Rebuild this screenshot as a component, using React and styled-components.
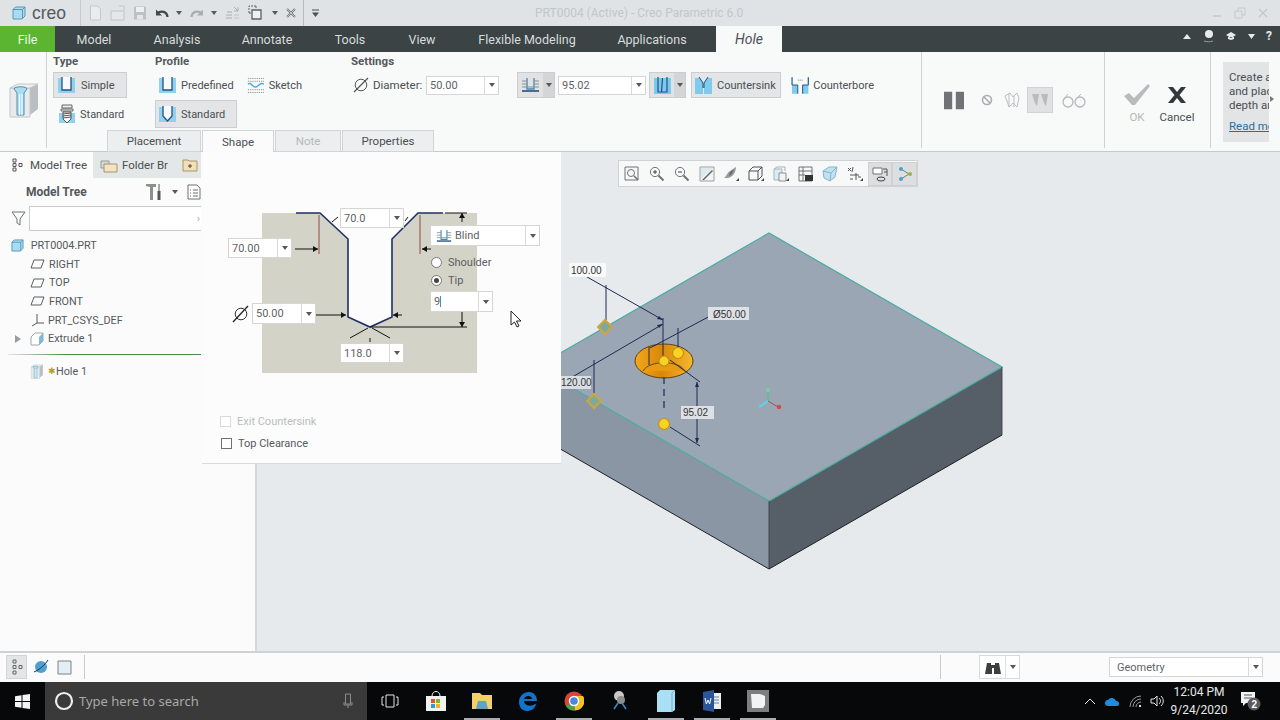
import React from "react";
import styled, { createGlobalStyle } from "styled-components";

const GlobalStyle = createGlobalStyle`
  html, body { margin: 0; padding: 0; background: #fff; overflow: hidden; }
  * { box-sizing: border-box; }
`;

const Screen = styled.div`
  width: 1280px;
  height: 720px;
  display: flex;
  flex-direction: column;
  overflow: hidden;
  font-family: Roboto, "Noto Sans", sans-serif;
  font-size: 11.5px;
  color: #4a4f52;
`;

/* ---------- title bar ---------- */
const TitleBar = styled.div`
  height: 26px;
  flex: none;
  display: flex;
  align-items: center;
  background: #dfe3e5;
  position: relative;
  padding-left: 12px;
`;
const Brand = styled.div`
  display: flex;
  align-items: center;
  gap: 6px;
  width: 68px;
  font-family: "Liberation Sans", sans-serif;
  font-size: 17.5px;
  color: #555a5d;
`;
const QuickBar = styled.div`
  display: flex;
  align-items: center;
  gap: 7.5px;
  height: 26px;
  padding: 0 6px 0 8px;
  border-left: 1px solid #c6cacc;
  border-right: 1px solid #b8bcbf;
`;
const More = styled.div`
  margin-left: 7px;
  display: flex;
`;
const WindowTitle = styled.div`
  position: absolute;
  left: 535px;
  top: 6px;
  color: #c2c7ca;
  font-size: 12px;
  white-space: nowrap;
`;
const WindowButtons = styled.div`
  margin-left: auto;
  display: flex;
  gap: 11px;
  padding-right: 11px;
  color: #c5c9cc;
`;

/* ---------- menu bar ---------- */
const MenuBar = styled.div`
  height: 26px;
  flex: none;
  display: flex;
  align-items: stretch;
  background: #3b4345;
`;
const FileTab = styled.div`
  width: 55px;
  display: flex;
  align-items: center;
  justify-content: center;
  background: #5cb531;
  color: #eef7e8;
  font-size: 12.5px;
`;
const MenuItem = styled.div`
  width: ${(p) => p.$w}px;
  display: flex;
  align-items: center;
  justify-content: center;
  color: #d8dcdd;
  font-size: 12.5px;
  white-space: nowrap;
`;
const HoleTab = styled.div`
  width: 66px;
  display: flex;
  align-items: center;
  justify-content: center;
  background: #f8f9f9;
  color: #4d5255;
  font-style: italic;
  font-size: 14px;
`;
const MenuRight = styled.div`
  margin-left: auto;
  display: flex;
  align-items: center;
  gap: 11px;
  padding: 0 8px 6px 0;
  color: #e8eaea;
  font-weight: 700;
  font-size: 12px;
`;

/* ---------- ribbon ---------- */
const Ribbon = styled.div`
  height: 100px;
  flex: none;
  display: flex;
  background: #f8f9f9;
  border-bottom: 1px solid #c6cacc;
`;
const LeadIcon = styled.div`
  width: 47px;
  flex: none;
  height: 96px;
  display: flex;
  align-items: center;
  justify-content: center;
  padding-left: 2px;
  border-right: 1px solid #cfd2d4;
`;
const RibbonMain = styled.div`
  width: 875px;
  flex: none;
  position: relative;
  display: flex;
  flex-direction: column;
  height: 100px;
  &::after {
    content: "";
    position: absolute;
    right: 0;
    top: 0;
    width: 1px;
    height: 96px;
    background: #cfd2d4;
  }
`;
const GroupRow = styled.div`
  height: 78px;
  flex: none;
  display: flex;
`;
const Group = styled.div`
  width: ${(p) => p.$w}px;
  flex: none;
  padding-left: ${(p) => p.$pad || 0}px;
  display: flex;
  flex-direction: column;
`;
const GroupLabel = styled.div`
  height: 20px;
  padding-top: 2px;
  font-weight: 700;
  font-size: 11.5px;
  color: #54585b;
`;
const ToolRow = styled.div`
  display: flex;
  align-items: center;
  height: ${(p) => p.$h || 26}px;
  margin-top: ${(p) => p.$mt || 0}px;
`;
const ToolButton = styled.div`
  display: flex;
  align-items: center;
  gap: ${(p) => p.$gap || 5}px;
  height: ${(p) => p.$h || 26}px;
  width: ${(p) => p.$w}px;
  margin-left: ${(p) => p.$ml || 0}px;
  padding-left: ${(p) => p.$pl || 3}px;
  background: ${(p) => (p.$on ? "#e3e5e6" : "transparent")};
  border: 1px solid ${(p) => (p.$on ? "#cbcdce" : "transparent")};
  font-size: 11px;
  white-space: nowrap;
  flex: none;
`;
const DiameterLabel = styled.div`
  display: flex;
  align-items: center;
  gap: 4px;
  width: 75px;
  padding-left: 2px;
`;
const Combo = styled.div`
  display: flex;
  align-items: center;
  width: ${(p) => p.$w}px;
  height: ${(p) => p.$h || 19}px;
  margin-left: ${(p) => p.$ml || 0}px;
  background: #fff;
  border: 1px solid #d3d5d6;
  flex: none;
`;
const ComboValue = styled.div`
  flex: 1;
  padding-left: ${(p) => p.$pl || 3}px;
  font-size: 11px;
  color: #5f6366;
  white-space: nowrap;
  display: flex;
  align-items: center;
  gap: 3px;
`;
const TextCaret = styled.span`
  width: 1px;
  height: 11px;
  margin-left: -3px;
  background: #4a8fb5;
`;
const ComboArrow = styled.div`
  width: 14px;
  height: 100%;
  display: flex;
  align-items: center;
  justify-content: center;
  border-left: 1px solid #d8dadb;
`;
const Arrow = styled.span`
  display: inline-block;
  width: 0;
  height: 0;
  border-left: 3px solid transparent;
  border-right: 3px solid transparent;
  border-top: 4px solid #55595c;
`;
const SplitButton = styled.div`
  display: flex;
  height: 26px;
  width: ${(p) => p.$w}px;
  margin-left: ${(p) => p.$ml || 0}px;
  flex: none;
  background: #e0e2e3;
  border: 1px solid #cbcdce;
`;
const SplitIcon = styled.div`
  flex: 1;
  display: flex;
  align-items: center;
  justify-content: center;
`;
const SplitArrow = styled.div`
  width: 11px;
  display: flex;
  align-items: center;
  justify-content: center;
  background: #d3d5d6;
`;
const PanelTabs = styled.div`
  display: flex;
  height: 22px;
  flex: none;
  padding-left: 60px;
`;
const PanelTab = styled.div`
  width: ${(p) => p.$w}px;
  display: flex;
  align-items: center;
  justify-content: center;
  background: ${(p) => (p.$on ? "#fbfbfb" : "#eceeef")};
  border: 1px solid #d2d4d5;
  border-bottom: ${(p) => (p.$on ? "none" : "1px solid #d2d4d5")};
  color: ${(p) => (p.$off ? "#b5b9bb" : "#4a4f52")};
  margin-right: 1px;
`;
const ControlGroup = styled.div`
  width: 183px;
  flex: none;
  height: 96px;
  display: flex;
  align-items: center;
  padding: 0 0 0 21px;
  border-right: 1px solid #cfd2d4;
`;
const ControlSlot = styled.div`
  width: ${(p) => p.$w}px;
  height: 26px;
  margin-left: ${(p) => p.$ml || 0}px;
  display: flex;
  align-items: center;
  justify-content: center;
  flex: none;
  background: ${(p) => (p.$on ? "#dfe1e2" : "transparent")};
  border: 1px solid ${(p) => (p.$on ? "#d0d2d3" : "transparent")};
`;
const ConfirmGroup = styled.div`
  width: 106px;
  flex: none;
  height: 96px;
  display: flex;
  padding: 31px 0 0 12px;
  border-right: 1px solid #cfd2d4;
`;
const ConfirmAction = styled.div`
  width: 40px;
  display: flex;
  flex-direction: column;
  align-items: center;
  color: ${(p) => (p.$off ? "#b6babc" : "#4a4f52")};
`;
const ConfirmGlyph = styled.div`
  height: 24px;
  display: flex;
  align-items: center;
`;
const ConfirmText = styled.div`
  margin-top: 2px;
  line-height: 16px;
`;
const HelpCard = styled.div`
  margin: 10px 0 0 12px;
  width: 46px;
  height: 80px;
  flex: none;
  overflow: hidden;
  background: #e2e4e6;
  padding: 8px 0 0 6px;
  font-size: 11.5px;
  line-height: 14px;
  white-space: nowrap;
  color: #4a4f52;
`;
const HelpLink = styled.div`
  margin-top: 7px;
  color: #2a6f9e;
  text-decoration: underline;
`;
const HelpCaret = styled.div`
  margin: 44px 0 0 1px;
  width: 0;
  height: 0;
  border-top: 3px solid transparent;
  border-bottom: 3px solid transparent;
  border-left: 4px solid #777;
`;

/* ---------- main area ---------- */
const Main = styled.div`
  flex: 1;
  display: flex;
  position: relative;
  min-height: 0;
`;
const Sidebar = styled.div`
  width: 257px;
  flex: none;
  background: #fbfbfb;
  border-right: 2px solid #d5d8da;
`;
const SideTabs = styled.div`
  height: 26px;
  display: flex;
  width: 201px;
`;
const SideTab = styled.div`
  width: ${(p) => p.$w}px;
  display: flex;
  align-items: center;
  gap: ${(p) => p.$gap || 6}px;
  padding-left: ${(p) => p.$pl || 10}px;
  background: ${(p) => (p.$on ? "#fbfbfb" : "#e4e7e8")};
  white-space: nowrap;
  overflow: hidden;
`;
const TreeHead = styled.div`
  height: 27px;
  width: 201px;
  display: flex;
  align-items: center;
  padding: 1px 0 0 26px;
  font-weight: 700;
  font-size: 12px;
  color: #54585b;
`;
const TreeTools = styled.div`
  margin-left: auto;
  display: flex;
  align-items: center;
  gap: 9px;
`;
const SearchRow = styled.div`
  display: flex;
  align-items: center;
  gap: 3px;
  padding-left: 11px;
  height: 26px;
  width: 201px;
`;
const SearchBox = styled.div`
  flex: 1;
  height: 25px;
  background: #fff;
  border: 1px solid #c9cbcc;
  border-right: none;
  display: flex;
  align-items: center;
  justify-content: flex-end;
  padding-right: 1px;
  color: #aaa;
  font-size: 11px;
`;
const Tree = styled.div`
  width: 201px;
  margin-top: 5px;
  font-size: 10.8px;
`;
const TreeRow = styled.div`
  height: 18.7px;
  display: flex;
  align-items: center;
  gap: 4px;
  padding-left: ${(p) => p.$indent}px;
  color: #55595c;
  white-space: nowrap;
`;
const TreeTwist = styled.span`
  width: 0;
  height: 0;
  margin-left: -15px;
  margin-right: 5px;
  border-top: 4px solid transparent;
  border-bottom: 4px solid transparent;
  border-left: 6px solid #9a9da0;
`;
const InsertLine = styled.div`
  height: 1px;
  margin: 6px 0 7px 8px;
  background: linear-gradient(90deg, #e4e6e4, #4c8a4a 30%, #4c8a4a);
`;
const NewMark = styled.span`
  color: #b79b2c;
  margin-right: -4px;
  font-size: 9px;
`;

const Viewport = styled.div`
  flex: 1;
  position: relative;
  background: #e7eaec;
  overflow: hidden;
`;
const ModelCanvas = styled.svg`
  position: absolute;
  inset: 0;
  width: 100%;
  height: 100%;
`;
const ViewToolbar = styled.div`
  position: absolute;
  left: 361px;
  top: 8px;
  height: 27px;
  width: 300px;
  display: flex;
  align-items: center;
  padding-left: 1px;
  background: #f7f8f8;
  border: 1px solid #cfd2d4;
`;
const ViewSlot = styled.div`
  width: 24.8px;
  height: 24px;
  display: flex;
  align-items: center;
  justify-content: center;
  background: ${(p) => (p.$on ? "#dcdedf" : "transparent")};
  border: 1px solid ${(p) => (p.$on ? "#cfd1d2" : "transparent")};
`;

/* ---------- shape panel ---------- */
const ShapePanel = styled.div`
  position: absolute;
  left: 202px;
  top: 0;
  width: 359px;
  height: 311px;
  background: #fcfcfc;
  box-shadow: 0 1px 0 #d9dcde;
  display: flex;
  flex-direction: column;
`;
const DiagramArea = styled.div`
  position: relative;
  height: 240px;
  margin-top: 40px;
  flex: none;
`;
const DiagramArt = styled.svg`
  position: absolute;
  inset: 0;
  width: 359px;
  height: 240px;
`;
const FloatCombo = styled(Combo)`
  position: absolute;
  left: ${(p) => p.$x - 202}px;
  top: ${(p) => p.$y - 192}px;
  margin: 0;
  border-color: #d5d6d2;
`;
const RadioRow = styled.div`
  position: absolute;
  left: 229px;
  top: ${(p) => p.$y - 192 - 8}px;
  display: flex;
  align-items: center;
  gap: 6px;
  height: 16px;
  font-size: 11px;
  color: #5b5f62;
`;
const Radio = styled.span`
  width: 11px;
  height: 11px;
  border-radius: 50%;
  background: #fff;
  border: 1px solid #77797b;
  display: flex;
  align-items: center;
  justify-content: center;
  &::after {
    content: "";
    width: 5px;
    height: 5px;
    border-radius: 50%;
    background: ${(p) => (p.$on ? "#444" : "transparent")};
  }
`;
const CheckRow = styled.div`
  display: flex;
  align-items: center;
  gap: 6px;
  height: 22px;
  padding-left: ${(p) => (p.$off ? 18 : 19)}px;
  font-size: 11px;
  color: ${(p) => (p.$off ? "#b9bcbe" : "#55595c")};
`;
const CheckBox = styled.span`
  width: 11px;
  height: 11px;
  border: 1px solid ${(p) => (p.$off ? "#d8dadb" : "#6e7072")};
  background: #fff;
`;
const CheckList = styled.div`
  margin-top: -22px;
`;
const Cursor = styled.svg`
  position: absolute;
  left: 308px;
  top: 118px;
`;

/* ---------- status bar ---------- */
const StatusBar = styled.div`
  height: 31px;
  flex: none;
  display: flex;
  align-items: center;
  background: #fbfbfb;
  border-top: 2px solid #cfd2d4;
  padding: 0 0 1px 6px;
`;
const StatusSlot = styled.div`
  width: 21px;
  height: 24px;
  margin-right: ${(p) => p.$mr || 3}px;
  display: flex;
  align-items: center;
  justify-content: center;
  background: ${(p) => (p.$on ? "#e3e5e6" : "transparent")};
  border: 1px solid ${(p) => (p.$on ? "#d2d4d5" : "transparent")};
`;
const StatusDivider = styled.div`
  width: 1px;
  height: 24px;
  background: #c9cccd;
  margin-left: ${(p) => p.$ml}px;
`;
const FindButton = styled.div`
  margin-left: 38px;
  width: 41px;
  height: 24px;
  display: flex;
  border: 1px solid #d8dadb;
  background: #fff;
`;
const FindIcon = styled.div`
  flex: 1;
  display: flex;
  align-items: center;
  justify-content: center;
  border-right: 1px solid #dddfe0;
`;
const FindArrow = styled.div`
  width: 13px;
  display: flex;
  align-items: center;
  justify-content: center;
`;

/* ---------- taskbar ---------- */
const Taskbar = styled.div`
  height: 38px;
  flex: none;
  display: flex;
  align-items: center;
  background: #070809;
  color: #e8e8e8;
`;
const StartButton = styled.div`
  width: 45px;
  display: flex;
  justify-content: center;
`;
const SearchField = styled.div`
  width: 322px;
  height: 38px;
  background: #3a3a3a;
  display: flex;
  align-items: center;
  padding: 0 14px 0 9px;
  gap: 5px;
  color: #a9a9a9;
  font-family: "Noto Sans", sans-serif;
  font-size: 13px;
`;
const MicSlot = styled.div`
  margin-left: auto;
  display: flex;
`;
const TaskIcon = styled.div`
  width: 46px;
  height: 38px;
  flex: none;
  position: relative;
  display: flex;
  align-items: center;
  justify-content: center;
  &::after {
    content: "";
    position: absolute;
    left: 5px;
    right: 5px;
    bottom: 0;
    height: 2px;
    background: ${(p) => (p.$open ? "#a9adb3" : "transparent")};
  }
`;
const Tray = styled.div`
  margin-left: auto;
  display: flex;
  align-items: center;
  gap: 8px;
`;
const Clock = styled.div`
  width: 62px;
  margin: 0 -8px 0 -4px;
  text-align: center;
  font-family: Roboto, sans-serif;
  font-size: 12px;
  line-height: 18px;
  white-space: nowrap;
`;
const Notify = styled.div`
  width: 40px;
  margin-right: 10px;
  display: flex;
  justify-content: center;
`;

/* ---------- icons ---------- */
const Svg = ({ w = 16, h = 16, box, children }) => (
  <svg width={w} height={h} viewBox={box || `0 0 ${w} ${h}`} fill="none">
    {children}
  </svg>
);

const Cube = ({ s = 14 }) => (
  <Svg w={s} h={s} box="0 0 14 14">
    <path d="M1 3.500 3.500 1H13v9l-3 3H1z" fill="#a9dcf2" stroke="#5b97b5" />
    <path d="M1 3.500h9.500V13M10.500 3.500 13 1" stroke="#5b97b5" />
  </Svg>
);
const Doc = ({ c = "#c4c8ca" }) => (
  <Svg w={13} h={16}>
    <path d="M1.500 1h7l3 3v11h-10z" fill="#e9ecee" stroke={c} />
  </Svg>
);
const FolderOpen = () => (
  <Svg w={16} h={16}>
    <path d="M1 6h13v9H1zM9 1h5v4" fill="#e4e7e8" stroke="#c0c4c6" />
  </Svg>
);
const Save = () => (
  <Svg w={14} h={16}>
    <path d="M1 1.500h12v13H1z" fill="#bcc1c4" />
    <path d="M3 2h8v5H3z" fill="#eceeef" />
    <path d="M4 10h6v4.500H4z" fill="#e3e6e7" />
  </Svg>
);
const Undo = ({ c = "#44494c", flip }) => (
  <Svg w={14} h={14}>
    <g transform={flip ? "matrix(-1 0 0 1 14 0)" : undefined}>
      <path d="M12.500 11C12 6 8 4.500 3 6.500" stroke={c} strokeWidth="2.200" />
      <path d="M1 3.500v6h6z" fill={c} />
    </g>
  </Svg>
);
const Regen = () => (
  <Svg w={16} h={16}>
    <path d="M1 10h6M1 13h6M2 7h5M9 2l4 4M13 2v4h-4" stroke="#a9aeb1" />
    <path d="M9 10h5M9 13h5" stroke="#c0c4c6" />
  </Svg>
);
const Windows = () => (
  <Svg w={16} h={16}>
    <path d="M4 5h9v9H4z" stroke="#5d6265" strokeWidth="1.300" fill="#eef1f2" />
    <path d="M1 8V1h7M8 1v3M1 8h3" stroke="#5d6265" strokeDasharray="2 1" />
  </Svg>
);
const CloseX = () => (
  <Svg w={12} h={12}>
    <path d="M2 2l8 8M10 2l-8 8" stroke="#6f7477" strokeWidth="2" />
    <path d="M2 2l8 8M10 2l-8 8" stroke="#dfe3e5" strokeWidth=".7" />
  </Svg>
);
const DropLine = () => (
  <Svg w={9} h={9}>
    <path d="M1 1h7" stroke="#4b5053" />
    <path d="M1 3.500h7L4.500 8z" fill="#4b5053" />
  </Svg>
);
const SimpleHole = () => (
  <Svg w={19} h={19}>
    <path d="M1 2h17v15H1z" fill="#8fd2ef" />
    <path d="M5 1h9v13H5z" fill="#f6fafb" />
    <path d="M5 1v13h9V1" stroke="#2c4f7f" strokeWidth="1.300" />
  </Svg>
);
const TipHole = () => (
  <Svg w={19} h={19}>
    <path d="M1 2h17v15H1z" fill="#8fd2ef" />
    <path d="M5 1h9v10l-4.500 5L5 11z" fill="#f6fafb" />
    <path d="M5 1v10l4.500 5 4.500-5V1" stroke="#2c4f7f" strokeWidth="1.300" />
  </Svg>
);
const StandardScrew = () => (
  <Svg w={18} h={20}>
    <path d="M1 9h16v10H1z" fill="#8fd2ef" />
    <path d="M4 1h10v3H4zM3 5h12v2H3z" stroke="#666" fill="#eee" />
    <path d="M5 8h8v7l-4 4-4-4z" fill="#fff" stroke="#555" />
    <path d="M5 10l8-1M5 12l8-1M5 14l8-1" stroke="#555" />
  </Svg>
);
const SketchWave = () => (
  <Svg w={19} h={18}>
    <path d="M1 2h17M1 5h17M1 14h17M1 17h17" stroke="#7b7f82" strokeDasharray="1 1" />
    <path d="M1 8c4-3 5 5 9 3s4-5 8-3" stroke="#4fa9d4" strokeWidth="1.600" />
  </Svg>
);
const DiameterGlyph = ({ s = 16, c = "#55595c" }) => (
  <Svg w={s} h={s} box="0 0 16 16">
    <circle cx="8" cy="8" r="5.800" stroke={c} />
    <path d="M1 15 15 1" stroke={c} strokeWidth="1.200" />
  </Svg>
);
const BlindGlyph = ({ w = 19 }) => (
  <Svg w={w} h={16} box="0 0 19 16">
    <path d="M6 1v11h7V1" stroke="#3e8bb8" strokeWidth="1.300" />
    <path d="M1 4h5M1 7h5M13 4h5M13 7h5M1 10h17" stroke="#8a8f92" />
    <path d="M1 14h17" stroke="#2b4d7a" strokeWidth="1.600" />
  </Svg>
);
const ThroughGlyph = () => (
  <Svg w={19} h={19}>
    <path d="M1 2h17v16H1z" fill="#79cbee" />
    <path d="M5 1v15h9V1M9.500 2l-1 14" stroke="#2c4f7f" strokeWidth="1.200" />
  </Svg>
);
const SinkGlyph = () => (
  <Svg w={19} h={20}>
    <path d="M1 3h5l3 5v11H1zM18 3h-5l-3 5v11h8z" fill="#7ecbec" />
    <path d="M5 2l4 6v5M14 2l-4 6v5" stroke="#2c4f7f" />
  </Svg>
);
const BoreGlyph = () => (
  <Svg w={19} h={20}>
    <path d="M1 2h1v8h5v9H1zM12 10h5V2h1v17h-6z" fill="#7ecbec" />
    <path d="M1 2v8h6v9M18 2v8h-6v9" stroke="#2c4f7f" />
    <path d="M7 5h5" stroke="#777" strokeDasharray="1 1" />
  </Svg>
);
const HoleFeature = ({ w = 30, h = 36 }) => (
  <Svg w={w} h={h} box="0 0 30 36">
    <path d="M21 5 29 2v25l-8 6z" fill="#b9bec2" />
    <path d="M1 6h20v29H1z" fill="#e8eaeb" stroke="#c3c6c8" />
    <path d="M1 6 9 2h20l-8 4z" fill="#eef0f1" stroke="#c3c6c8" />
    <path d="M5 7c0-3 13-3 13 0l-3 4v22H8V11z" fill="#a8dcf2" stroke="#5b8da8" />
    <path d="M10.500 12v21M13 12v21" stroke="#f2fafd" strokeWidth="1.200" />
  </Svg>
);
const FlyCorner = () => <path d="m13 15 3-3v3z" fill="#444" />;
const ViewIcon = ({ kind }) => {
  const g = "#6f7477";
  const shapes = {
    refit: <><path d="M1 1h13v13H1z" stroke={g} /><circle cx="7" cy="7" r="3.500" stroke={g} /><path d="m10 10 4 4" stroke={g} strokeWidth="1.600" /></>,
    zoomin: <><circle cx="6" cy="6" r="4.600" stroke={g} /><path d="M4 6h4M6 4v4" stroke="#345" /><path d="m9.500 9.500 5 5" stroke={g} strokeWidth="2" /></>,
    zoomout: <><circle cx="6" cy="6" r="4.600" stroke={g} /><path d="M4 6h4" stroke="#345" /><path d="m9.500 9.500 5 5" stroke={g} strokeWidth="2" /></>,
    repaint: <><path d="M1 1h14v14H1z" fill="#f2f5f6" stroke="#9a9fa2" /><path d="M2 2h12L2 13z" fill="#dfe8ec" /><path d="M3 14 13 4l1 1-9 9z" fill="#5d6265" /></>,
    shade: <><path d="M1 12c2-1 3-5 6-7s4-3 6-4c0 5-3 10-8 11z" fill="#9a9da0" /><path d="M7 6c1-1 3-2 4-3-1 3-2 6-5 7z" fill="#6a6d70" /><FlyCorner /></>,
    box: <><path d="M1 5h9v9H1zM1 5l4-4h9v9l-4 4M10 5l4-4" stroke="#4d5255" /><FlyCorner /></>,
    named: <><path d="M1 3h8v11H1z" fill="#d9edf6" stroke="#a5b3ba" /><path d="M1 3l3-2h8v4" stroke="#a5b3ba" /><path d="M6 7h7v8H6z" fill="#f2f3f3" stroke="#8b8f92" /><FlyCorner /></>,
    shot: <><path d="M1 1h13v14H1z" stroke={g} /><path d="M1 5h13M1 9h6M5 1v14" stroke={g} /><path d="M7 9h8v6H7z" fill="#333" /></>,
    glass: <><path d="M1 5l6-4h8l-2 10-5 4-6-3z" fill="#bfe2f2" stroke="#8cb5c8" /><path d="M1 5l8 2 6-6M9 7l-1 8" stroke="#8cb5c8" /></>,
    datum: <><path d="M1 2l3 3M4 2 1 5M6 1l-1 5M3 9h9M9 7v7M3 13h3M11 11h3" stroke="#55595c" /><FlyCorner /></>,
    display: <><path d="M1 2h9v6H1z" fill="#fff" stroke={g} /><path d="M11 3h4v7M12 6h3" stroke="#555" /><ellipse cx="9" cy="13" rx="4" ry="2" stroke="#444" /></>,
    spin: <><path d="M4 3 12 8 4 13" stroke="#6a7f8a" /><circle cx="4" cy="3" r="2" fill="#4ca1c9" /><circle cx="13" cy="8" r="2" fill="#9ab24a" /><circle cx="4" cy="13" r="2" fill="#4ca1c9" /></>,
  };
  return <Svg w={16} h={16}>{shapes[kind]}</Svg>;
};
const Plane = () => (
  <Svg w={15} h={10}>
    <path d="M4 1h10l-3 8H1z" stroke="#5a5f62" />
  </Svg>
);
const SmallCheck = () => (
  <Svg w={28} h={22}>
    <path d="M1 12l5-3 5 5L25 0l2 2-15 19H9z" fill="#b9bcbe" />
  </Svg>
);
const BigX = () => (
  <Svg w={20} h={18}>
    <path d="M1 1h5l4 5 4-5h5l-6.500 8 6.500 8h-5l-4-5-4 5H1l6.500-8z" fill="#33383b" />
  </Svg>
);

const diagramNavy = "#1f2f68";

const App = () => {
  const viewIcons = ["refit", "zoomin", "zoomout", "repaint", "shade", "box", "named", "shot", "glass", "datum", "display", "spin"];
  return (
    <Screen>
      <GlobalStyle />
      <TitleBar>
        <Brand>
          <Cube />
          creo
        </Brand>
        <QuickBar>
          <Doc />
          <FolderOpen />
          <Save />
          <Undo />
          <Arrow />
          <Undo c="#a9aeb1" flip />
          <Arrow />
          <Regen />
          <Windows />
          <Arrow />
          <CloseX />
        </QuickBar>
        <More>
          <DropLine />
        </More>
        <WindowTitle>PRT0004 (Active) - Creo Parametric 6.0</WindowTitle>
        <WindowButtons>
          <Svg w={12} h={12}><path d="M2 9h8" stroke="#c5c9cc" strokeWidth="1.500" /></Svg>
          <Svg w={12} h={12}><path d="M1 4h7v7H1zM4 4V1h7v7H8" stroke="#c5c9cc" /></Svg>
          <Svg w={12} h={12}><path d="M2 2l8 8M10 2l-8 8" stroke="#c5c9cc" strokeWidth="1.400" /></Svg>
        </WindowButtons>
      </TitleBar>

      <MenuBar>
        <FileTab>File</FileTab>
        <MenuItem $w={78}>Model</MenuItem>
        <MenuItem $w={88}>Analysis</MenuItem>
        <MenuItem $w={92}>Annotate</MenuItem>
        <MenuItem $w={74}>Tools</MenuItem>
        <MenuItem $w={70}>View</MenuItem>
        <MenuItem $w={140}>Flexible Modeling</MenuItem>
        <MenuItem $w={110}>Applications</MenuItem>
        <MenuItem $w={9} />
        <HoleTab>Hole</HoleTab>
        <MenuRight>
          <Svg w={10} h={7}><path d="M1 6l4-5 4 5z" fill="#e8eaea" /></Svg>
          <Svg w={11} h={14}><circle cx="6" cy="5" r="4" fill="#e8eaea" /><path d="M1 12c3 1 6 1 9 0" stroke="#9a9d9e" /></Svg>
          <Svg w={12} h={10}><path d="M6 1l5 3-5 3-5-3zM3 6v2l3 1 3-1V6" fill="#e8eaea" /></Svg>
          <Svg w={7} h={5}><path d="M0 0h7L3.500 5z" fill="#e8eaea" /></Svg>
          ?
        </MenuRight>
      </MenuBar>

      <Ribbon>
        <LeadIcon>
          <HoleFeature />
        </LeadIcon>
        <RibbonMain>
          <GroupRow>
            <Group $w={108} $pad={6}>
              <GroupLabel>Type</GroupLabel>
              <ToolRow>
                <ToolButton $on $w={74} $pl={3} $gap={5}><SimpleHole />Simple</ToolButton>
              </ToolRow>
              <ToolRow $h={28} $mt={2}>
                <ToolButton $w={74} $h={28} $pl={4} $gap={4}><StandardScrew />Standard</ToolButton>
              </ToolRow>
            </Group>
            <Group $w={196}>
              <GroupLabel>Profile</GroupLabel>
              <ToolRow>
                <ToolButton $w={84} $pl={2} $gap={4}><SimpleHole />Predefined</ToolButton>
                <ToolButton $w={60} $ml={4} $pl={0} $gap={4}><SketchWave />Sketch</ToolButton>
              </ToolRow>
              <ToolRow $h={28} $mt={2}>
                <ToolButton $on $w={82} $h={28} $pl={2} $gap={4}><TipHole />Standard</ToolButton>
              </ToolRow>
            </Group>
            <Group $w={570}>
              <GroupLabel>Settings</GroupLabel>
              <ToolRow>
                <DiameterLabel><DiameterGlyph />Diameter:</DiameterLabel>
                <Combo $w={73}>
                  <ComboValue>50.00</ComboValue>
                  <ComboArrow><Arrow /></ComboArrow>
                </Combo>
                <SplitButton $w={38} $ml={18}>
                  <SplitIcon><BlindGlyph /></SplitIcon>
                  <SplitArrow><Arrow /></SplitArrow>
                </SplitButton>
                <Combo $w={88} $ml={3}>
                  <ComboValue>95.02</ComboValue>
                  <ComboArrow><Arrow /></ComboArrow>
                </Combo>
                <SplitButton $w={37} $ml={3}>
                  <SplitIcon><ThroughGlyph /></SplitIcon>
                  <SplitArrow><Arrow /></SplitArrow>
                </SplitButton>
                <ToolButton $on $w={90} $ml={5} $pl={2} $gap={4}><SinkGlyph />Countersink</ToolButton>
                <ToolButton $w={88} $ml={6} $pl={0} $gap={4}><BoreGlyph />Counterbore</ToolButton>
              </ToolRow>
            </Group>
          </GroupRow>
          <PanelTabs>
            <PanelTab $w={94}>Placement</PanelTab>
            <PanelTab $w={72} $on>Shape</PanelTab>
            <PanelTab $w={66} $off>Note</PanelTab>
            <PanelTab $w={92}>Properties</PanelTab>
          </PanelTabs>
        </RibbonMain>
        <ControlGroup>
          <ControlSlot $w={22}>
            <Svg w={22} h={19}><path d="M0 0h9v19H0zM13 0h9v19h-9z" fill="#6f7375" /></Svg>
          </ControlSlot>
          <ControlSlot $w={21} $ml={11}>
            <Svg w={12} h={12}><circle cx="6" cy="6" r="4.500" stroke="#a9adaf" strokeWidth="1.600" /><path d="m3 3 6 6" stroke="#a9adaf" strokeWidth="1.600" /></Svg>
          </ControlSlot>
          <ControlSlot $w={30}>
            <Svg w={18} h={18}><path d="M2 5l5-3 3 4 4-4 2 5-2 9-4-4-4 4-2-6zM6 2v14M11 4v12" stroke="#bcc0c2" /></Svg>
          </ControlSlot>
          <ControlSlot $w={26} $on>
            <Svg w={18} h={16}><path d="M1 2h7l-2 12-2-3zM10 2h7l-2 12-2-3z" fill="#b9bcbe" /></Svg>
          </ControlSlot>
          <ControlSlot $w={41}>
            <Svg w={26} h={16}><circle cx="7" cy="10" r="5" stroke="#b5b9bb" strokeWidth="1.300" /><circle cx="19" cy="10" r="5" stroke="#b5b9bb" strokeWidth="1.300" /><path d="M2 8 7 2M14 8l6-6" stroke="#b5b9bb" /></Svg>
          </ControlSlot>
        </ControlGroup>
        <ConfirmGroup>
          <ConfirmAction $off>
            <ConfirmGlyph><SmallCheck /></ConfirmGlyph>
            <ConfirmText>OK</ConfirmText>
          </ConfirmAction>
          <ConfirmAction>
            <ConfirmGlyph><BigX /></ConfirmGlyph>
            <ConfirmText>Cancel</ConfirmText>
          </ConfirmAction>
        </ConfirmGroup>
        <HelpCard>
          Create a<br />and plac<br />depth ar
          <HelpLink>Read me</HelpLink>
        </HelpCard>
        <HelpCaret />
      </Ribbon>

      <Main>
        <Sidebar>
          <SideTabs>
            <SideTab $w={93} $on>
              <Svg w={14} h={14}><path d="M3 1h3v3H3zM3 5.500h3v3H3zM3 10h3v3H3zM9 5.500h3v3H9z" stroke="#555" /></Svg>
              Model Tree
            </SideTab>
            <SideTab $w={85} $pl={7} $gap={4}>
              <Svg w={18} h={16}><path d="M1 4h8v7H1z" fill="#d6d8d6" stroke="#999" /><path d="M4 7h13v8H4z" fill="#f4e3c2" stroke="#a89468" /></Svg>
              Folder Br
            </SideTab>
            <SideTab $w={23} $pl={4}>
              <Svg w={16} h={14}><path d="M1 2h5l1 1h8v10H1z" fill="#f2dfb8" stroke="#a89468" /><path d="M8 6v4M6 8h4" stroke="#444" /></Svg>
            </SideTab>
          </SideTabs>
          <TreeHead>
            Model Tree
            <TreeTools>
              <Svg w={18} h={18}><path d="M1 1h10v3H8v13H5V4L1 3z" fill="#8d8f8d" /><path d="M14 1v7" stroke="#555" /><path d="M12.500 8h3v9h-3z" fill="#555" /></Svg>
              <Arrow />
              <Svg w={14} h={16}><path d="M1 1h9l3 3v11H1z" stroke="#6c7073" fill="#fff" /><path d="M3 6h1M6 6h5M3 9h1M6 9h5M3 12h1M6 12h5" stroke="#6c7073" /></Svg>
            </TreeTools>
          </TreeHead>
          <SearchRow>
            <Svg w={15} h={15}><path d="M1 1h13L9 8v6l-3-2V8z" stroke="#6c7073" /></Svg>
            <SearchBox>›</SearchBox>
          </SearchRow>
          <Tree>
            <TreeRow $indent={11}><Cube s={13} />&nbsp;PRT0004.PRT</TreeRow>
            <TreeRow $indent={30}><Plane />RIGHT</TreeRow>
            <TreeRow $indent={30}><Plane />TOP</TreeRow>
            <TreeRow $indent={30}><Plane />FRONT</TreeRow>
            <TreeRow $indent={30}>
              <Svg w={14} h={14}><path d="M7 1v9m0 0h7M7 10l-5 3" stroke="#55595c" /></Svg>
              PRT_CSYS_DEF
            </TreeRow>
            <TreeRow $indent={30}>
              <TreeTwist />
              <Svg w={14} h={14}><path d="M1 5l4-4h8v8l-4 4H1z" fill="#fff" stroke="#a3a7aa" /><path d="M9 5l4-4v8l-4 4z" fill="#7dbcd8" /></Svg>
              Extrude 1
            </TreeRow>
            <InsertLine />
            <TreeRow $indent={30}>
              <HoleFeature w={14} h={15} />
              <NewMark>✱</NewMark>
              Hole 1
            </TreeRow>
          </Tree>
        </Sidebar>

        <Viewport>
          <ModelCanvas viewBox="257 152 1023 499">
            <defs>
              <linearGradient id="pit" x1="0" x2="1">
                <stop offset="0" stopColor="#f2a81c" />
                <stop offset="0.45" stopColor="#d98708" />
                <stop offset="1" stopColor="#f6b82f" />
              </linearGradient>
            </defs>
            <path d="M536 367 769 501V569L536 435z" fill="#8a96a3" />
            <path d="M1002 367V435L769 569V501z" fill="#565e67" />
            <path d="M769 233 1002 367 769 501 536 367z" fill="#9ba6b4" />
            <path d="M536 367 769 233 1002 367 769 501z" stroke="#46ad9f" strokeWidth="1.200" fill="none" />
            <path d="M769 501V569M1002 367V435" stroke="#3a4149" strokeWidth=".9" />
            <path d="M536 435 769 569 1002 435" stroke="#1d2126" strokeWidth="1" fill="none" />
            <ellipse cx="664" cy="361" rx="29" ry="17" fill="url(#pit)" stroke="#5a4310" />
            <path d="M643 371c6-11 36-11 42 0" stroke="#4a3a12" strokeWidth=".8" fill="#e99a10" />
            <g stroke="#1e2a52" strokeWidth="1" fill="none">
              <path d="M573 269 663 320M562 383 663 324M606 285V320M594 360V393M663 318V361" />
              <path d="M712 315 650 348M678 328V348M649 347V365M670 360 700 382M670 427 700 446M697 382V443" />
              <path d="M664 377V413" strokeDasharray="7 5" strokeWidth="1.200" />
            </g>
            <g fill="#1e2a52">
              <path d="M663 320l-6-1 2-3zM663 324l-6 1 2 3zM697 382l-2 5h4zM697 443l-2-5h4z" />
            </g>
            <g fill="#f7d326" stroke="#c08f10" strokeWidth="1.200">
              <circle cx="664" cy="361" r="5" />
              <circle cx="678" cy="353" r="5.500" />
              <circle cx="664" cy="424" r="5.500" />
            </g>
            <g fill="#7fa9a0" stroke="#cfa63a" strokeWidth="2">
              <path d="M605 320l7 7-7 7-7-7z" />
              <path d="M594 394l7 7-7 7-7-7z" />
            </g>
            <path d="M768 401V391" stroke="#5bbf8a" strokeWidth="1.200" />
            <circle cx="768" cy="390" r="2" fill="#6fd69a" />
            <path d="M768 401 759 407" stroke="#5fd0e6" strokeWidth="2.200" />
            <path d="M768 401 778 407" stroke="#9a5550" strokeWidth="1" />
            <circle cx="779" cy="407" r="2.200" fill="#d84a3a" />
            <g fontFamily="Liberation Sans, sans-serif" fontSize="10" fill="#333">
              <rect x="569" y="263" width="37" height="14" fill="#f8f9f9" />
              <text x="571" y="273.500">100.00</text>
              <rect x="560" y="376" width="31" height="13" fill="#d9dee3" />
              <text x="561" y="386">120.00</text>
              <rect x="708" y="307" width="41" height="13" fill="#dde1e5" />
              <text x="713" y="317.500">Ø50.00</text>
              <rect x="681" y="406" width="33" height="13" fill="#dde1e5" />
              <text x="683" y="416">95.02</text>
            </g>
          </ModelCanvas>
          <ViewToolbar>
            {viewIcons.map((k) => (
              <ViewSlot key={k} $on={k === "display" || k === "spin"}>
                <ViewIcon kind={k} />
              </ViewSlot>
            ))}
          </ViewToolbar>
        </Viewport>

        <ShapePanel>
          <DiagramArea>
            <DiagramArt viewBox="202 192 359 240">
              <path d="M262 213H477V373H262z" fill="#d4d3c8" />
              <path d="M320 213H418L392 239V317L370 327 348 317V239z" fill="#fcfcfc" />
              <path d="M296 213H320L348 239V317L370 327 392 317V239L418 213H443" stroke={diagramNavy} strokeWidth="1.600" fill="none" />
              <path d="M319 215V254M420 215V254" stroke="#8a4a44" strokeWidth="1" />
              <g stroke="#111" strokeWidth="1" fill="none">
                <path d="M295 249H318M422 249H431M445 213H467M462 213V222M462 312V327M370 327H467" />
                <path d="M316 315H346M393 315H402M350 338 368 328M372 328 390 338M370 338V342" />
                <path d="M332 222 338 217M405 221 408 217" />
              </g>
              <g fill="#111">
                <path d="M318 249l-5-3v6zM422 249l5-3v6zM462 213l-3 5h6zM462 327l-3-5h6zM346 315l-5-3v6zM393 315l5-3v6z" />
              </g>
              <g transform="translate(233 306)">
                <circle cx="8" cy="8" r="5.800" stroke="#333" fill="none" />
                <path d="M0 16 15 0" stroke="#222" strokeWidth="1.300" />
              </g>
            </DiagramArt>
            <FloatCombo $x={340} $y={208} $w={64} $h={20}>
              <ComboValue>70.0</ComboValue>
              <ComboArrow><Arrow /></ComboArrow>
            </FloatCombo>
            <FloatCombo $x={228} $y={238} $w={64} $h={20}>
              <ComboValue>70.00</ComboValue>
              <ComboArrow><Arrow /></ComboArrow>
            </FloatCombo>
            <FloatCombo $x={252} $y={303} $w={64} $h={21}>
              <ComboValue>50.00</ComboValue>
              <ComboArrow><Arrow /></ComboArrow>
            </FloatCombo>
            <FloatCombo $x={340} $y={343} $w={64} $h={20}>
              <ComboValue>118.0</ComboValue>
              <ComboArrow><Arrow /></ComboArrow>
            </FloatCombo>
            <FloatCombo $x={430} $y={225} $w={110} $h={21}>
              <ComboValue $pl={5}>
                <BlindGlyph w={16} />
                Blind
              </ComboValue>
              <ComboArrow><Arrow /></ComboArrow>
            </FloatCombo>
            <RadioRow $y={262}><Radio />Shoulder</RadioRow>
            <RadioRow $y={280}><Radio $on />Tip</RadioRow>
            <FloatCombo $x={430} $y={291} $w={63} $h={21}>
              <ComboValue>9<TextCaret /></ComboValue>
              <ComboArrow><Arrow /></ComboArrow>
            </FloatCombo>
            <Cursor width="13" height="18" viewBox="0 0 13 18">
              <path d="M1 1v14l3.500-3 2.500 5 2-1-2.500-5H11z" fill="#fff" stroke="#222" />
            </Cursor>
          </DiagramArea>
          <CheckList>
            <CheckRow $off><CheckBox $off />Exit Countersink</CheckRow>
            <CheckRow><CheckBox />Top Clearance</CheckRow>
          </CheckList>
        </ShapePanel>
      </Main>

      <StatusBar>
        <StatusSlot $on>
          <Svg w={14} h={16}><path d="M3 1h3v3H3zM3 6.500h3v3H3zM3 12h3v3H3zM9 6.500h3v3H9z" stroke="#666" /></Svg>
        </StatusSlot>
        <StatusSlot>
          <Svg w={16} h={16}><circle cx="8" cy="8" r="6" fill="#4f9fd0" /><path d="M1 13C6 11 12 6 15 1" stroke="#234" /></Svg>
        </StatusSlot>
        <StatusSlot $mr={7}>
          <Svg w={15} h={15}><path d="M1 1h13v13H1z" fill="#e4eff5" stroke="#788288" /></Svg>
        </StatusSlot>
        <StatusDivider $ml={2} />
        <StatusDivider $ml={855} />
        <FindButton>
          <FindIcon>
            <Svg w={16} h={15}><path d="M2 3h4v2h4V3h4l2 11H9V8H7v6H0z" fill="#3b3f41" /></Svg>
          </FindIcon>
          <FindArrow><Arrow /></FindArrow>
        </FindButton>
        <Combo $w={154} $h={20} $ml={89}>
          <ComboValue $pl={7}>Geometry</ComboValue>
          <ComboArrow><Arrow /></ComboArrow>
        </Combo>
      </StatusBar>

      <Taskbar>
        <StartButton>
          <Svg w={15} h={15}><path d="M0 2.200 6.500 1.300V7H0zM7.500 1.100 15 0v7H7.500zM0 8h6.500v5.700L0 12.800zM7.500 8H15v7l-7.500-1.100z" fill="#f4f4f4" /></Svg>
        </StartButton>
        <SearchField>
          <Svg w={20} h={20}><circle cx="10" cy="10" r="8" stroke="#eee" strokeWidth="2.200" /></Svg>
          Type here to search
          <MicSlot>
            <Svg w={10} h={16}><path d="M2.500 1h5v10h-5zM1 9v3h8V9M5 12v3" stroke="#8c8c8c" /></Svg>
          </MicSlot>
        </SearchField>
        <TaskIcon>
          <Svg w={18} h={14}><path d="M5 1h8v12H5zM3 3H1v8h2M15 3h2v8h-2" stroke="#e6e6e6" /></Svg>
        </TaskIcon>
        <TaskIcon>
          <Svg w={22} h={22}><path d="M1 6h20v15H1z" fill="#f2f2f2" /><path d="M7 6c0-6 8-6 8 0" stroke="#eee" /><path d="M6 9h4v4H6z" fill="#e2522f" /><path d="M11 9h4v4h-4z" fill="#7fb62f" /><path d="M6 14h4v4H6z" fill="#2a9bdc" /><path d="M11 14h4v4h-4z" fill="#f0b51c" /></Svg>
        </TaskIcon>
        <TaskIcon $open>
          <Svg w={20} h={18}><path d="M0 1h8l2 2h10v14H0z" fill="#f3d06a" /><path d="M6 9h8l2 8H4z" fill="#5fa3c9" /></Svg>
        </TaskIcon>
        <TaskIcon>
          <Svg w={20} h={21}><path d="M18 13c-1 5-5 7-9 7-5 0-8-4-8-9C1 5 6 1 11 1c5 0 8 4 8 9H6c0 5 8 6 11 3zM6 8h8c0-4-7-4-8 0z" fill="#1173c9" /></Svg>
        </TaskIcon>
        <TaskIcon $open>
          <Svg w={20} h={20}><circle cx="10" cy="10" r="9.500" fill="#d8453a" /><path d="M10 10 2 15a9.500 9.500 0 0 0 9 4.500z" fill="#4ba24e" /><path d="M10 5h9a9.500 9.500 0 0 1-8 14.500z" fill="#f3c225" /><circle cx="10" cy="10" r="4.500" fill="#4a86e0" stroke="#fff" strokeWidth="1.400" /></Svg>
        </TaskIcon>
        <TaskIcon>
          <Svg w={20} h={22}><circle cx="9" cy="6" r="5" fill="#c9c9c9" /><circle cx="11" cy="10" r="4" fill="#8e8e8e" /><path d="M8 13l-4 6M12 13l4 6" stroke="#3a87c8" strokeWidth="1.600" /></Svg>
        </TaskIcon>
        <TaskIcon $open>
          <Svg w={20} h={24}><path d="M1 4 4 1h15v20l-3 2H1z" fill="#a9e0f5" /><path d="M16 4v19M16 4l3-3" stroke="#6fb4d0" /></Svg>
        </TaskIcon>
        <TaskIcon $open>
          <Svg w={20} h={22}><path d="M8 3h11v16H8z" fill="#f0f0f0" /><path d="M10 7h7M10 10h7M10 13h7" stroke="#5c7fb0" /><path d="M1 2 12 0v22L1 20z" fill="#2a5699" /><path d="M3 8l1.400 6 1.600-4 1.600 4L9 8" stroke="#fff" /></Svg>
        </TaskIcon>
        <TaskIcon $open>
          <Svg w={22} h={24}><path d="M0 1h22v22H0z" fill="#7b7f80" /><path d="M4 5h9l5 2v9l-2 3H5z" fill="#f3f3f3" /></Svg>
        </TaskIcon>
        <Tray>
          <Svg w={12} h={8}><path d="M1 7l5-5 5 5" stroke="#e6e6e6" /></Svg>
          <Svg w={16} h={10}><path d="M4 10a3 3 0 0 1 0-6 4.500 4.500 0 0 1 8 1 2.500 2.500 0 0 1 1 5z" fill="#1c8fe0" /></Svg>
          <Svg w={14} h={14}><path d="M2 13a11 11 0 0 1 11-11M5 13a8 8 0 0 1 8-8M8 13a5 5 0 0 1 5-5" stroke="#9a9a9a" /><path d="M11 11h2v2h-2z" fill="#ddd" /></Svg>
          <Svg w={14} h={14}><path d="M1 5h3l3-3v10L4 9H1zM9 4c2 2 2 4 0 6M11 2c3 3 3 7 0 10" stroke="#e6e6e6" /></Svg>
          <Clock>
            12:04 PM
            <br />
            9/24/2020
          </Clock>
          <Notify>
            <Svg w={22} h={22}>
              <path d="M2 2h14v11H7l-3 3v-3H2z" fill="#f2f2f2" />
              <path d="M5 5h8M5 8h8" stroke="#555" />
              <circle cx="15" cy="14" r="6.500" fill="#5a5a5a" />
              <text x="12.500" y="17.500" fontSize="10" fontWeight="700" fill="#fff" fontFamily="Liberation Sans, sans-serif">2</text>
            </Svg>
          </Notify>
        </Tray>
      </Taskbar>
    </Screen>
  );
};

export default App;
